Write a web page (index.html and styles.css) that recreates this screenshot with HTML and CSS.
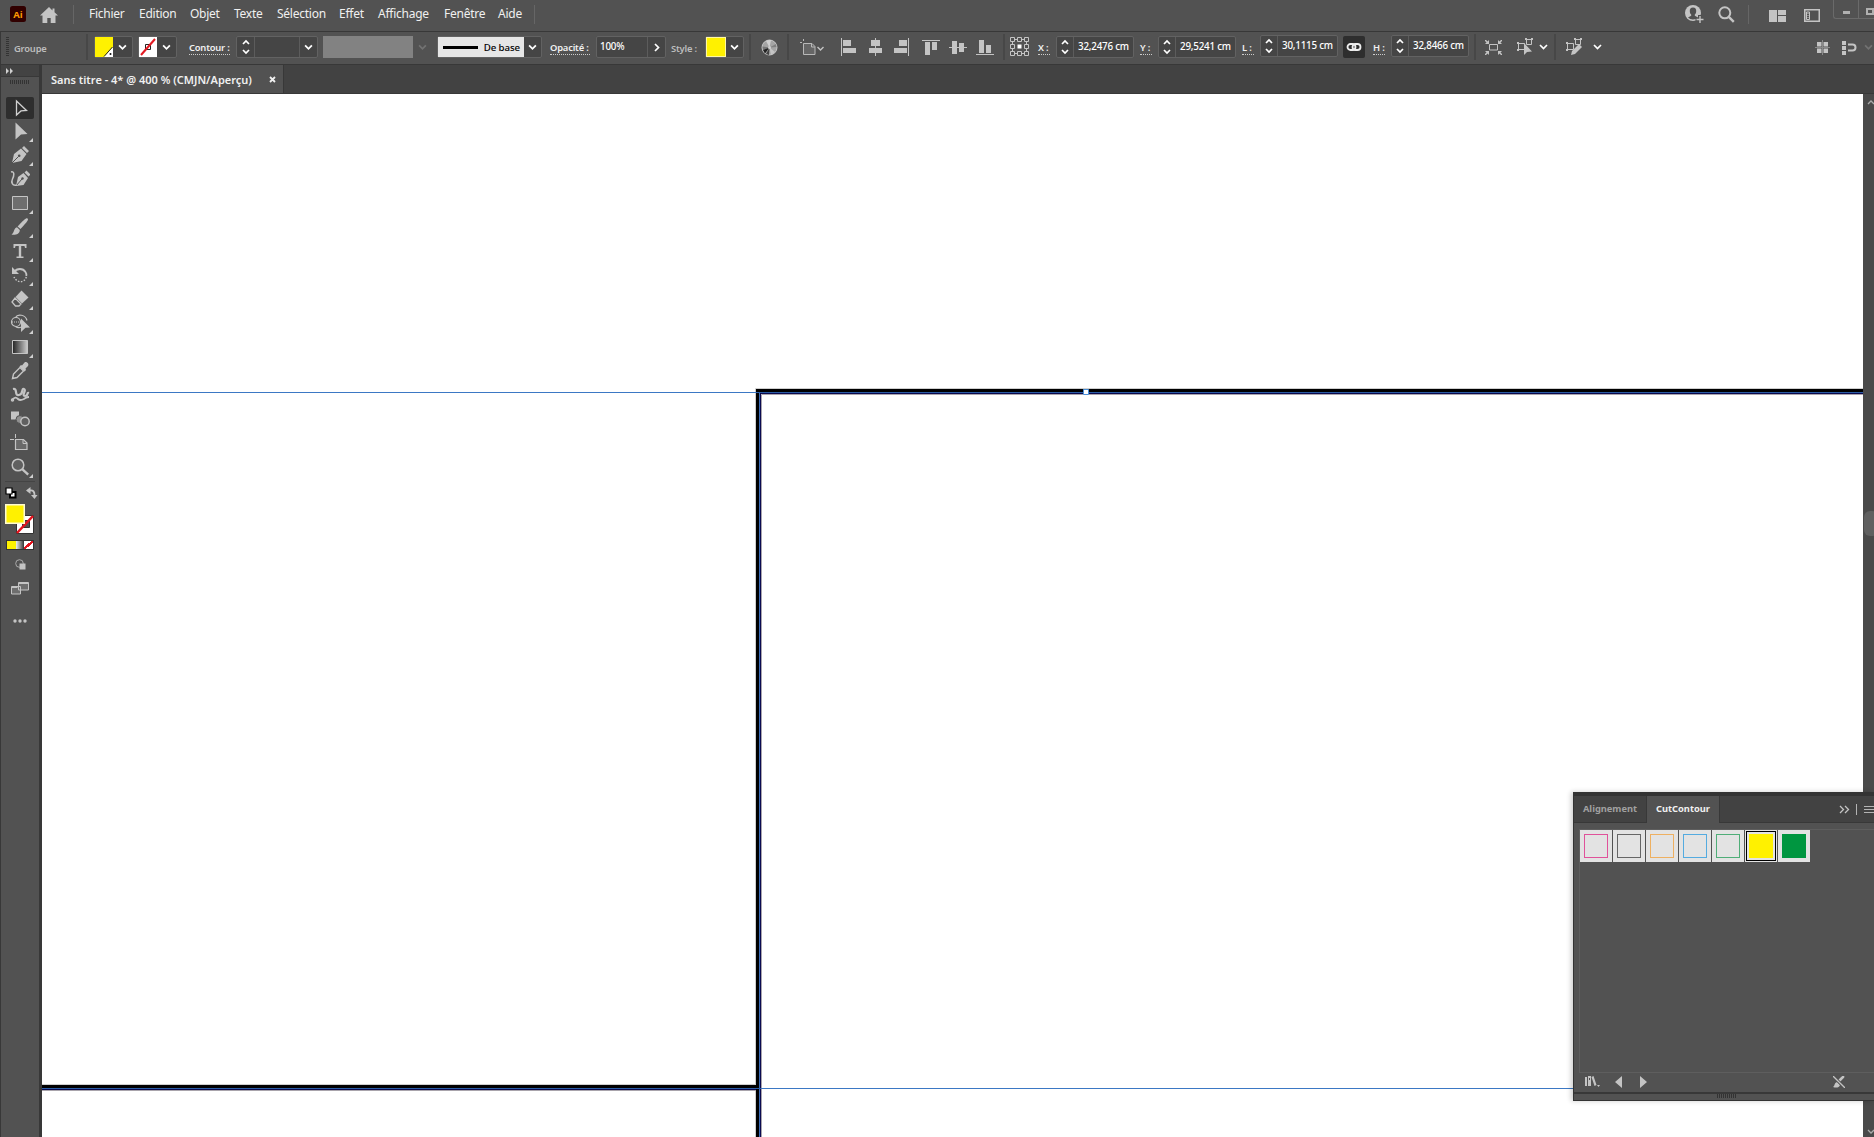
FILE: index.html
```
<!DOCTYPE html>
<html lang="fr">
<head>
    <meta charset="utf-8">
    <title>Sans titre - 4</title>
    <link rel="stylesheet" href="styles.css">
</head>
<body>
    <!-- shared icons -->
    <svg class="defs" width="0" height="0">
        <symbol id="down" viewBox="0 0 8 6"><path d="M1 1.2l3 3 3-3" fill="none" stroke="currentColor" stroke-width="1.6"/></symbol>
        <symbol id="updown" viewBox="0 0 8 16"><path d="M1 5l3-3 3 3M1 11l3 3 3-3" fill="none" stroke="currentColor" stroke-width="1.7"/></symbol>
    </svg>

    <div class="menubar">
        <svg class="ai" width="16" height="16"><rect width="16" height="16" rx="2.5" fill="#310000"/><text x="8" y="11.8" text-anchor="middle">Ai</text></svg>
        <svg class="home" width="18" height="16" viewBox="0 0 18 16"><path d="M9 0L0 8.6h2.500V16h4.800v-5h3.400v5h4.800V8.600H18L14.500 5.300V1.500h-2v1.900z" fill="#c4c4c4"/></svg>
        <span class="vline"></span>
        <nav>
            <span class="w35">Fichier</span><span class="w36">Edition</span><span class="w29">Objet</span><span class="w28">Texte</span><span class="w47">Sélection</span><span class="w24">Effet</span><span class="w51">Affichage</span><span class="w39">Fenêtre</span><span class="w24">Aide</span>
        </nav>
        <span class="vline"></span>
        <div class="menu-right">
            <svg class="user" width="19" height="19" viewBox="0 0 19 19"><circle cx="8" cy="8" r="8" fill="#c4c4c4"/><path d="M8 2.500c-2.300 0-3.400 1.700-3.200 3.700 0 1.500.6 2.600 1.400 3.400v1.200L3 12.500C5.500 15 10.500 15 13 12.500l-3.200-1.700V9.600c.8-.8 1.400-1.900 1.400-3.400.2-2-.9-3.700-3.200-3.700z" fill="#505050"/><path d="M10 9h9v10h-9z" fill="none"/><path d="M15 10v9M10.500 14.500h9" stroke="#505050" stroke-width="4"/><path d="M15 11v7M11.500 14.500h7" stroke="#c4c4c4" stroke-width="1.400"/></svg>
            <svg class="search" width="17" height="17" viewBox="0 0 17 17"><circle cx="6.800" cy="6.800" r="5.500" fill="none" stroke="#c4c4c4" stroke-width="2"/><path d="M10.800 10.800l5 5" stroke="#c4c4c4" stroke-width="2.400"/></svg>
            <span class="vline"></span>
            <svg class="layout" width="17" height="12"><path d="M0 0h8v12H0zM9 0h8v5H9zM9 6h8v6H9z" fill="#c4c4c4"/></svg>
            <svg class="wspace" width="16" height="13"><path d="M.75 .75h14.500v11.500H.75z" fill="none" stroke="#c4c4c4" stroke-width="1.500"/><path d="M2.500 3h3v7.500h-3z" fill="none" stroke="#c4c4c4"/><path d="M4 4v6" stroke="#c4c4c4" stroke-dasharray="1 1"/></svg>
            <div class="winbtns"><span class="min"></span><span class="max"></span></div>
        </div>
    </div>

    <div class="controlbar">
        <span class="grip-v"></span>
        <span class="lbl groupe">Groupe</span>
        <span class="sep s1"></span>
        <div class="box fill"><svg width="18" height="20"><path d="M0 0h18v20H0z" fill="#fff100"/><path d="M18 10v10H9z" fill="#fff"/><path d="M17.500 10L9 19.500" stroke="#222"/><circle cx="15.500" cy="17" r="1" fill="#111"/></svg><i><svg width="9" height="7"><use href="#down"/></svg></i></div>
        <div class="box stroke"><svg width="18" height="20"><path d="M0 0h18v20H0z" fill="#fff"/><path d="M6.500 7.500h5v5h-5z" fill="none" stroke="#222"/><path d="M2 18L16 2" stroke="#e31b23" stroke-width="2"/></svg><i><svg width="9" height="7"><use href="#down"/></svg></i></div>
        <span class="lbl dot contour">Contour :</span>
        <div class="box width"><i><svg width="8" height="16"><use href="#updown"/></svg></i><b></b><i><svg width="9" height="7"><use href="#down"/></svg></i></div>
        <div class="profile"></div>
        <svg class="dim" width="9" height="7"><use href="#down"/></svg>
        <div class="box brush"><div class="brush-def"><hr><span>De base</span></div><i><svg width="9" height="7"><use href="#down"/></svg></i></div>
        <span class="lbl dot opac">Opacité :</span>
        <div class="box pct"><b>100%</b><i><svg width="6" height="9"><path d="M1 1l3.500 3.500L1 8" fill="none" stroke="#fff" stroke-width="1.700"/></svg></i></div>
        <span class="lbl style">Style :</span>
        <div class="box styl"><em></em><i><svg width="9" height="7"><use href="#down"/></svg></i></div>
        <span class="sep s2"></span>
        <svg class="wheel" width="17" height="17"><circle cx="8.500" cy="8.500" r="7.500" fill="#a4a4a4" stroke="#c8c8c8"/><path d="M8.500 8.500L5 2a8 8 0 0 1 5-1z" fill="#d0d0d0"/><path d="M8.500 8.500L1.500 7.500 2 11z" fill="#777"/><path d="M8.500 8.500L2 11l2 3.500z" fill="#222"/><path d="M8.500 8.500L5 15l3 1z" fill="#444"/><path d="M8.500 8.500L10 16l4-3z" fill="#c4c4c4"/><path d="M8.500 8.500L15 5l.5 3z" fill="#808080"/><circle cx="8.500" cy="8.500" r="1.500" fill="#d0d0d0"/></svg>
        <span class="sep s3"></span>
        <svg class="artb" width="26" height="17"><path d="M3.500 4.500h8.500l3 3v8h-11.500z" fill="#666" stroke="#b8b8b8"/><path d="M3.500 0v2M0 3.500h2M11.500 4.500v3.500H15" fill="none" stroke="#b8b8b8"/><path d="M17.500 8l3 3 3-3" fill="none" stroke="#c4c4c4" stroke-width="1.400"/></svg>

        <div class="align">
            <svg width="15" height="18"><path d="M0 0h1v18H0zM2 2h8v6H2zM2 10h13v5H2z"/></svg>
            <svg width="15" height="18"><path d="M7 0h1v18H7zM3 2h9v6H3zM1 10h13v5H1z"/></svg>
            <svg width="15" height="18"><path d="M14 0h1v18h-1zM5 2h8v6H5zM0 10h13v5H0z"/></svg>
            <svg class="g" width="18" height="17"><path d="M0 1h18v1H0zM3 3h5v13H3zM10 3h5v8h-5z"/></svg>
            <svg width="18" height="17"><path d="M0 8h18v1H0zM3 2h5v13H3zM10 4h5v9h-5z"/></svg>
            <svg width="18" height="17"><path d="M0 15h18v1H0zM3 1h5v13H3zM10 6h5v8h-5z"/></svg>
        </div>
        <span class="sep s4"></span>
        <svg class="refpt" width="20" height="20"><path d="M2.500 2.500h14v14h-14z" fill="none" stroke="#c4c4c4"/><path d="M.5 .5h4v4h-4zM7.500 .5h4v4h-4zM14.500 .5h4v4h-4zM.5 7.500h4v4h-4zM14.500 7.500h4v4h-4zM.5 14.500h4v4h-4zM7.500 14.500h4v4h-4zM14.500 14.500h4v4h-4z" fill="#505050" stroke="#c4c4c4"/><path d="M7.500 7.500h4v4h-4z" fill="#fff"/></svg>
        <span class="lbl dot coord cx">X :</span>
        <div class="box num"><i><svg width="8" height="16"><use href="#updown"/></svg></i><b>32,2476 cm</b></div>
        <span class="lbl dot coord">Y :</span>
        <div class="box num"><i><svg width="8" height="16"><use href="#updown"/></svg></i><b>29,5241 cm</b></div>
        <span class="lbl dot coord">L :</span>
        <div class="box num up"><i><svg width="8" height="16"><use href="#updown"/></svg></i><b>30,1115 cm</b></div>
        <div class="link"><svg width="16" height="8"><g fill="none" stroke="#eee" stroke-width="1.800"><rect x="1.500" y="1" width="8" height="6" rx="3"/><rect x="6.500" y="1" width="8" height="6" rx="3"/></g></svg></div>
        <span class="lbl dot coord ch">H :</span>
        <div class="box num up"><i><svg width="8" height="16"><use href="#updown"/></svg></i><b>32,8466 cm</b></div>
        <span class="sep s5"></span>
        <svg class="isol" width="17" height="15"><path d="M4.500 4.500h8v5.500h-8z" fill="none" stroke="#c4c4c4"/><path d="M0 0l3 3M17 0l-3 3M0 15l3-3M17 15l-3-3" stroke="#c4c4c4" stroke-width="1.500"/><path d="M0 4h4V0zM17 4h-4V0zM0 11h4v4zM17 11h-4v4z" fill="#c4c4c4"/></svg>
        <svg class="selsim" width="32" height="18"><path d="M1.500 5.500h6v6h-6zM9.500 1.500h5v5h-5z" fill="none" stroke="#c4c4c4"/><path d="M0 5h2M0 12h2M8 1h2M14 1h2" stroke="#c4c4c4" stroke-width="2"/><path d="M7 5v12l3-3 5-.5z" fill="#c4c4c4"/><path d="M23 7l3.500 3.500L30 7" fill="none" stroke="#fff" stroke-width="1.700"/></svg>
        <span class="sep s6"></span>
        <svg class="editsim" width="36" height="18"><path d="M1.500 5.500h6v6h-6zM9.500 1.500h5v5h-5z" fill="none" stroke="#c4c4c4"/><path d="M0 5h2M0 12h2M8 1h2M14 1h2" stroke="#c4c4c4" stroke-width="2"/><path d="M5 17l1-4 7-7 3 3-7 7z" fill="#c4c4c4"/><path d="M28 7l3.500 3.500L35 7" fill="none" stroke="#fff" stroke-width="1.700"/></svg>
        <div class="ctl-right">
            <svg width="15" height="15"><path d="M2 2h4.500v4.500H2zM8.500 2H13v4.500H8.500zM2 8.500h4.500V13H2zM8.500 8.500H13V13H8.500z" fill="#c4c4c4"/><path d="M7.500 0v15M0 7.500h15" stroke="#8a8a8a"/></svg>
            <svg width="15" height="15"><path d="M0 1h4v4H0zM0 6h4v4H0zM0 11h4v4H0z" fill="#c4c4c4"/><path d="M6 4.500h4.500a3 3 0 0 1 0 6H6" fill="none" stroke="#c4c4c4" stroke-width="2"/></svg>
            <svg class="dim" width="9" height="7"><use href="#down"/></svg>
        </div>
    </div>

    <div class="work">
        <div class="toolcol">
            <div class="tools">
                <div class="tools-head"><svg width="8" height="6"><path d="M0 0l3 3-3 3zM4 0l3 3-3 3z" fill="#d0d0d0"/></svg></div>
                <span class="grip-h"></span>
                <div class="tool on"><svg width="20" height="20"><path d="M6.500 3l10 9.500-5.500.4L6.500 17z" fill="none" stroke="#d0d0d0" stroke-width="1.300"/></svg></div>
                <div class="tool more"><svg width="20" height="20"><path d="M5.500 1.500l12 11.500-6.500.4-5.500 5z"/></svg></div>
                <div class="tool more"><svg width="20" height="20"><path d="M2 18l2-9 7-5.500 5.500 5.500-5 7zM12 3l2-2 5 5-2 2z"/><path d="M2 18l6.500-6.500" stroke="#505050"/><circle cx="9.200" cy="10.800" r="1.300" fill="#505050"/></svg></div>
                <div class="tool"><svg width="20" height="20"><path d="M6 17l2-9 5.500-4 4.500 5-4.500 7zM14.500 3.500l2-2 4 4-2 2z"/><path d="M6 17l6-7" stroke="#505050"/><circle cx="12.500" cy="9.500" r="1.200" fill="#505050"/><path d="M1 3c4-1 3 4 1.500 7S2 17.500 7 16" fill="none" stroke="#c4c4c4" stroke-width="1.500"/></svg></div>
                <div class="tool more"><svg width="20" height="20"><path d="M2.500 3.500h15v13h-15z" fill="#6e6e6e" stroke="#c4c4c4"/></svg></div>
                <div class="tool more"><svg width="20" height="20"><path d="M17.500 1.500c1.500 1 0 3-7 10.500L7.600 9.500C14 2.500 16.500 .5 17.500 1.500zM7 10.300l2.800 2.700c0 4.500-5.300 5.500-8.300 4.500 3-1.500 2-6.500 5.500-7.200z"/></svg></div>
                <div class="tool more"><svg width="20" height="20"><path d="M3.500 3h13v4h-1.500l-.5-2H11.200v10.500H13.500V17h-7v-1.500h2.300V5H5.500L5 7H3.500z"/></svg></div>
                <div class="tool more"><svg width="20" height="20"><path d="M4 7c3-4 9-4 11.500 0 1 1.500 1 3 .8 4" fill="none" stroke="#c4c4c4" stroke-width="1.800"/><path d="M2 2v7h7z"/><path d="M16.300 12c-1.500 5.500-9 7-12.300 0" fill="none" stroke="#c4c4c4" stroke-width="1.500" stroke-dasharray="1.500 1.500"/></svg></div>
                <div class="tool more"><svg width="20" height="20"><path d="M11.500 1.500l7 7-6.500 6L5.500 8z"/><path d="M5 9l6 6-2 2H5.500L2 13z" fill="none" stroke="#c4c4c4" stroke-width="1.300"/></svg></div>
                <div class="tool more"><svg width="20" height="20"><g fill="none" stroke="#c4c4c4" stroke-width="1.200"><circle cx="6" cy="9" r="4.500"/><path d="M5.500 4.500c2-4 10-3 11.500 3M5.500 13.500c2 1.500 4 1.500 6 .5"/><path d="M2 9h10" stroke-dasharray="1 1"/></g><path d="M11 5.500l9 9-4.500.3L11 19z"/></svg></div>
                <div class="tool more"><svg width="20" height="20"><defs><linearGradient id="gr"><stop offset="0" stop-color="#222"/><stop offset="1" stop-color="#ccc"/></linearGradient></defs><path d="M2.500 3.500h15v13h-15z" fill="url(#gr)" stroke="#c4c4c4"/></svg></div>
                <div class="tool"><svg width="20" height="20"><path d="M12 4.500l2.500-3c2-1.500 5 1.500 3.500 3.500L15.500 7.500l.5 1.500-1.500 1.500L9.500 5.500 11 4z"/><path d="M10 6.500L3.500 13 2.500 17.500l4.500-1L13.500 10z" fill="none" stroke="#c4c4c4" stroke-width="1.400"/></svg></div>
                <div class="tool"><svg width="20" height="20"><g fill="none" stroke="#c4c4c4"><path d="M3 4c5-1 1 7 6 6s2-7 5-6-3 7 1 7 1-4 4-3" stroke-width="2.200"/><path d="M2 15c3-3 4-3 6-1s4 1 6 0 2-2 5-2" stroke-width="1.800"/><circle cx="2.500" cy="15" r="1" stroke-width="1.500"/></g></svg></div>
                <div class="tool"><svg width="20" height="20"><path d="M1 2.500h8v8H1z"/><circle cx="10" cy="10.500" r="4" fill="#909090" stroke="#505050"/><circle cx="15" cy="12.500" r="4.200" fill="#606060" stroke="#c4c4c4" stroke-width="1.400"/></svg></div>
                <div class="tool"><svg width="20" height="20"><path d="M5.500 6.500h8l3.500 3.500v6.500h-11.500z" fill="#6a6a6a" stroke="#c4c4c4" stroke-width="1.200"/><path d="M0 6.500h4M5.500 1v4M13 6.500v4h4" fill="none" stroke="#c4c4c4"/></svg></div>
                <div class="tool more"><svg width="20" height="20"><circle cx="8" cy="8" r="5.800" fill="#606060" stroke="#c4c4c4" stroke-width="1.500"/><path d="M12.200 12.200l6 5.500" stroke="#c4c4c4" stroke-width="2.400"/></svg></div>
                <span class="tsep"></span>
                <div class="fillrow"><svg width="12" height="12"><path d="M5 5h5.500v5.500H5z" fill="#fff" stroke="#000" stroke-width="2"/><path d="M1 1h6v6H1z" fill="#fff" stroke="#000" stroke-width="1.200"/></svg><svg width="12" height="12"><path d="M4 3.500c3-.5 4.500 1 4.500 4.500" fill="none" stroke="#c4c4c4" stroke-width="1.800"/><path d="M0 3.500L4.500 0v7zM5 8h6.500L8.500 12z" fill="#c4c4c4"/></svg></div>
                <svg class="colors" width="30" height="30"><path d="M11.500 11.500h17v18h-17z" fill="#fff" stroke="#333"/><path d="M17.500 16.500h7v7h-7z" fill="#505050" stroke="#333"/><path d="M12 29L28 12" stroke="#e3141e" stroke-width="2.500"/><path d="M.75 .75h18.500v18.500H.75z" fill="#fff100" stroke="#fffbd0" stroke-width="1.500"/></svg>
                <div class="modes"><span class="m1"></span><span class="m2"></span><span class="m3"></span></div>
                <svg class="mask" width="11" height="11"><circle cx="4.500" cy="4.500" r="3.800" fill="none" stroke="#aaa"/><path d="M4.500 4.500h6v6h-6z" fill="#c4c4c4"/></svg>
                <svg class="screen" width="18" height="13"><path d="M.5 4.500h9v7.500h-9zM7.500 .5h10v7.500h-10z" fill="#6e6e6e" stroke="#c4c4c4"/><path d="M7.500 1.500h10M.5 5.500h6" stroke="#c4c4c4"/></svg>
                <svg class="dots" width="14" height="4"><circle cx="2" cy="2" r="1.700"/><circle cx="7" cy="2" r="1.700"/><circle cx="12" cy="2" r="1.700"/></svg>
            </div>
        </div>
        <div class="doc">
            <div class="tabbar"><div class="tab"><span>Sans titre - 4* @ 400 % (CMJN/Aperçu)</span><svg width="7" height="7"><path d="M1 1l5 5M6 1L1 6" stroke="#f0f0f0" stroke-width="1.800"/></svg></div></div>
            <div class="view">
                <!-- artwork: two rectangles with selection edges -->
                <svg class="art" width="1821" height="1043">
                    <path d="M713.500 1043V294.500H1821M0 990.500h714" stroke="#cfcfcf" fill="none"/>
                    <path d="M714 295H1821v5H719v743h-5v-47H0v-5h714z" fill="#000"/>
                    <path d="M719.500 1043V300.500H1821M0 996.500h714" fill="none" stroke="#a9a4ac"/>
                    <path d="M718.500 1043V299.500H1821M0 995.500h714" fill="none" stroke="#0a0a50"/>
                    <path d="M717.500 1043V298.500" stroke="#3b6cb8"/>
                    <path d="M0 298.500h714M719 994.500h1102" stroke="#3b78c4"/>
                    <path d="M714 298.500h1107M0 994.500h719" stroke="#2b5ca4"/>
                    <path d="M1041.500 295.500h5v5h-5z" fill="#fff" stroke="#4a90d9"/>
                </svg>
                <div class="scroll"><svg class="sup" width="8" height="6"><path d="M1 5l3-3 3 3" fill="none" stroke="#aaa" stroke-width="1.300"/></svg><span class="thumb"></span><svg class="sdn" width="8" height="6"><path d="M1 1l3 3 3-3" fill="none" stroke="#aaa" stroke-width="1.300"/></svg></div>
            </div>
        </div>
    </div>

    <div class="panel">
        <div class="ptabs">
            <span class="ptab off">Alignement</span><span class="ptab cur">CutContour</span>
            <svg width="35" height="14"><path d="M1 4l3.500 3.500L1 11M6 4l3.500 3.500L6 11" fill="none" stroke="#c4c4c4" stroke-width="1.300"/><path d="M17.500 2v11M25 4.500h11M25 7.500h11M25 10.500h11" stroke="#b4b4b4"/></svg>
        </div>
        <div class="plist">
            <div class="sw"><i class="pink"></i></div>
            <div class="sw"><i class="grey"></i></div>
            <div class="sw"><i class="orange"></i></div>
            <div class="sw"><i class="blue"></i></div>
            <div class="sw"><i class="green"></i></div>
            <div class="sw sel"><i class="yellow"></i></div>
            <div class="sw"><i class="solid"></i></div>
        </div>
        <div class="pfoot">
            <svg width="64" height="12"><path d="M0 1h2v9H0zM3 0h3v10H3zM6.500 1L8.500 0l3 9-2 1zM12 9h3l-1.500 2z"/><path d="M4 2h1v2H4z" fill="#505050"/><path d="M37 0v12l-7-6zM55 0v12l7-6z"/></svg>
            <svg class="nobrush" width="12" height="12"><path d="M11 0c1 1 1 1-5 7L4 5C10-1 10-1 11 0zM4 6l3 3c-1 3-4 3-7 2 2-1 1-4 4-5z"/><path d="M0 0l12 12" stroke="#505050" stroke-width="3"/><path d="M0 0l12 12" stroke="#c4c4c4" stroke-width="1.300"/></svg>
        </div>
        <div class="pgrip"><span></span></div>
    </div>
</body>
</html>
```
FILE: styles.css
```
* {
    box-sizing: border-box;
}
body {
    margin: 0;
    width: 1874px;
    height: 1137px;
    overflow: hidden;
    background: #525252;
    color: #f0f0f0;
    font-family: "Noto Sans", "Open Sans", sans-serif;
    display: flex;
    flex-direction: column;
}
svg {
    display: block;
    flex: none;
}
.defs {
    position: absolute;
}

/* menu bar */
.menubar {
    height: 32px;
    flex: none;
    display: flex;
    align-items: center;
    padding: 0 0 3px 10px;
    border-bottom: 1px solid #383838;
}
.ai text {
    font: bold 9.5px "Open Sans", sans-serif;
    fill: #ff9a00;
}
.home {
    margin: 1px 15px 0 14px;
}
.vline {
    width: 1px;
    height: 19px;
    background: #666;
}
nav {
    display: flex;
    gap: 15px;
    margin: -1px 12px 0 15px;
    font-size: 12px;
    letter-spacing: -0.25px;
}
nav span {
    white-space: nowrap;
}
.w24 { width: 24px; }
.w28 { width: 28px; }
.w29 { width: 29px; }
.w35 { width: 35px; }
.w36 { width: 36px; }
.w39 { width: 39px; }
.w47 { width: 47px; }
.w51 { width: 51px; }
.menu-right {
    margin-left: auto;
    width: 189px;
    display: flex;
    align-items: center;
    height: 28px;
}
.search {
    margin: 0 13px 0 14px;
}
.layout {
    margin: 3px 18px 0 20px;
}
.wspace {
    margin: 3px 13px 0 0;
}
.winbtns {
    align-self: flex-start;
    display: flex;
    width: 41px;
    height: 19px;
    overflow: hidden;
    border: 1px solid #6a6a6a;
    border-width: 0 0 1px 1px;
    border-radius: 0 0 0 3px;
}
.min {
    width: 28px;
    height: 18px;
    border-right: 1px solid #6a6a6a;
    padding: 11px 8px 0 9px;
}
.min::before {
    content: "";
    display: block;
    height: 3px;
    background: #b0b0b0;
}
.max {
    margin: 8px 0 0 7px;
    width: 9px;
    height: 7px;
    border: 2px solid #b0b0b0;
}

/* control bar */
.controlbar {
    height: 33px;
    flex: none;
    display: flex;
    align-items: center;
    padding: 0 0 2px 5px;
    border-bottom: 1px solid #383838;
    border-left: 1px solid #383838;
    font-size: 9.4px;
}
.controlbar > * {
    flex: none;
}
.grip-v {
    width: 3px;
    height: 20px;
    background: repeating-linear-gradient(#333 0 1px, #525252 1px 2px);
}
.lbl {
    font-weight: 600;
    line-height: 13px;
    margin-top: 2px;
    white-space: nowrap;
    letter-spacing: -0.2px;
}
.dot {
    border-bottom: 1px dotted #ccc;
}
.groupe {
    width: 72px;
    margin-left: 5px;
    color: #bdbdbd;
}
.sep {
    width: 2px;
    height: 26px;
    background: #474747;
}
.box {
    display: flex;
    height: 22px;
    border: 1px solid #626262;
    border-radius: 2px;
    background: #454545;
    color: #fff;
}
.box > svg, .box > em {
    height: 20px;
}
.box i {
    flex: 1;
    display: flex;
    align-items: center;
    justify-content: center;
}
.box b {
    font-weight: 500;
    line-height: 19px;
    white-space: nowrap;
    letter-spacing: -0.2px;
}
.fill { width: 39px; margin-left: 6px; }
.stroke { width: 39px; margin-left: 5px; }
.contour { width: 41px; margin-left: 12px; }
.width { width: 82px; margin-left: 6px; }
.width b {
    width: 46px;
    border: 1px solid #5c5c5c;
    border-width: 0 1px;
}
.width i {
    flex: none;
    width: 17px;
}
.profile {
    width: 90px;
    height: 22px;
    margin-left: 5px;
    background: #828282;
}
.dim {
    color: #727272;
}
.profile + .dim {
    margin: 0 10px 0 5px;
}
.brush { width: 105px; }
.brush-def {
    width: 86px;
    background: #e6e6e6;
    color: #000;
    display: flex;
    align-items: center;
    justify-content: space-between;
    padding: 0 4px 0 5px;
    font-size: 9.7px;
    font-weight: 500;
    letter-spacing: -0.1px;
}
.brush-def hr {
    width: 35px;
    height: 3px;
    margin: 0;
    border: 0;
    background: #000;
}
.opac { width: 40px; margin-left: 8px; }
.pct { width: 70px; margin-left: 6px; }
.pct b {
    width: 51px;
    padding-left: 3px;
    font-size: 9.8px;
    border-right: 1px solid #5c5c5c;
}
.style { width: 29px; margin-left: 5px; color: #bdbdbd; }
.styl { width: 39px; margin-left: 5px; }
.styl em {
    width: 20px;
    background: #fff100;
    border: 1px solid #fff8a0;
}
.s2 { margin: 0 10px 0 5px; }
.s3 { margin: 0 11px 0 9px; }
.align {
    display: flex;
    align-items: center;
    gap: 9px;
    margin-left: 15px;
    fill: #c4c4c4;
}
.align svg:nth-child(2) {
    margin: 0 2px 0 3px;
}
.align .g {
    margin-left: 4px;
}
.s4 { margin: 0 5px 0 9px; }
.coord {
    width: 12px;
    margin: 2px 6px 0 5px;
}
.cx { margin-left: 8px; }
.ch { margin-left: 8px; }
.coord + .num {
    margin-right: 1px;
}
.num { width: 78px; }
.num i {
    flex: none;
    width: 17px;
    border-right: 1px solid #5c5c5c;
}
.num b {
    flex: 1;
    padding-left: 4px;
    font-size: 9.8px;
}
.up { margin-top: -2px; }
.link {
    width: 22px;
    height: 22px;
    margin-left: 4px;
    border-radius: 2px;
    background: #2e2e2e;
    display: flex;
    align-items: center;
    justify-content: center;
}
.s5 { margin: 0 9px 0 4px; }
.selsim { margin-left: 15px; }
.s6 { margin: 0 10px 0 5px; }
.ctl-right {
    margin-left: auto;
    display: flex;
    align-items: center;
    gap: 12px;
}
.ctl-right .dim {
    margin: 0 1px 0 -5px;
}

/* toolbox */
.work {
    flex: 1;
    display: flex;
    min-height: 0;
}
.toolcol {
    width: 42px;
    flex: none;
    background: #383838;
    padding: 0 3px 0 1px;
}
.tools {
    height: 100%;
    background: #525252;
    display: flex;
    flex-direction: column;
}
.tools-head {
    height: 12px;
    flex: none;
    padding: 3px 0 0 5px;
    background: #434343;
    border-bottom: 1px solid #383838;
}
.grip-h {
    flex: none;
    width: 20px;
    height: 4px;
    margin: 3px 0 12px 9px;
    background: repeating-linear-gradient(90deg, #333 0 1px, #525252 1px 2px);
}
.tool {
    position: relative;
    height: 24px;
    flex: none;
    padding: 1px 0 0 9px;
}
.tool svg {
    fill: #c4c4c4;
}
.on {
    height: 22px;
    width: 28px;
    margin: 1px 0 1px 5px;
    padding: 1px 0 0 4px;
    border-radius: 2px;
    background: #2e2e2e;
}
.more::after {
    content: "";
    position: absolute;
    left: 28px;
    bottom: 2px;
    border: 2px solid transparent;
    border-right-color: #d0d0d0;
    border-bottom-color: #d0d0d0;
}
.tsep {
    height: 1px;
    flex: none;
    margin: 1px 4px 5px;
    background: #444;
}
.fillrow {
    display: flex;
    gap: 9px;
    padding-left: 4px;
}
.colors { margin: 5px 0 0 4px; }
.modes {
    display: flex;
    width: 28px;
    height: 10px;
    margin: 6px 0 8px 5px;
    border: 1px solid #333;
}
.modes span {
    width: 9px;
}
.m1 { background: #fff100; }
.m2 { background: linear-gradient(90deg, #eee, #333); }
.m3 { background: linear-gradient(to bottom right, #fff 40%, #e3141e 40% 60%, #fff 60%); }
.mask { margin: 1px 0 12px 14px; }
.screen { margin-left: 10px; }
.dots {
    margin: 24px 0 0 12px;
    fill: #c4c4c4;
}

/* document */
.doc {
    flex: 1;
    display: flex;
    flex-direction: column;
}
.tabbar {
    height: 29px;
    flex: none;
    background: #424242;
    border-bottom: 1px solid #383838;
}
.tab {
    width: 242px;
    height: 28px;
    display: flex;
    align-items: center;
    justify-content: space-between;
    padding: 0 7px 0 9px;
    background: #525252;
    border-right: 1px solid #383838;
    font-size: 11px;
    font-weight: 600;
    white-space: nowrap;
}
.view {
    flex: 1;
    display: flex;
    background: #fff;
}
.scroll {
    width: 11px;
    flex: none;
    background: #4a4a4a;
    display: flex;
    flex-direction: column;
    padding: 5px 0 0 4px;
}
.thumb {
    width: 14px;
    height: 25px;
    margin: 406px 0 593px -3px;
    border-radius: 6px;
    background: #606060;
}

/* floating panel */
.panel {
    position: absolute;
    left: 1573px;
    top: 792px;
    width: 301px;
    height: 309px;
    display: flex;
    flex-direction: column;
    background: #525252;
    border: 1px solid #333;
    border-width: 4px 0 1px 1px;
    box-shadow: -2px 0 5px rgba(0, 0, 0, 0.2);
}
.ptabs {
    height: 27px;
    flex: none;
    display: flex;
    background: #424242;
    border-bottom: 1px solid #383838;
    font-size: 9.3px;
    font-weight: bold;
    line-height: 25px;
}
.ptabs svg {
    margin: 6px 0 0 auto;
}
.ptab {
    height: 27px;
    text-align: center;
}
.off {
    width: 72px;
    color: #a0a0a0;
}
.cur {
    width: 74px;
    background: #525252;
    border: 1px solid #383838;
    border-width: 0 1px;
}
.plist {
    height: 244px;
    flex: none;
    margin: 6px 0 0 5px;
    border: 1px solid #5e5e5e;
    border-right: 0;
    display: flex;
    align-items: flex-start;
    gap: 1px;
}
.sw {
    width: 32px;
    height: 32px;
    padding: 4px;
    background: #e3e3e3;
}
.sel {
    outline: 1px solid #000;
    outline-offset: -2px;
}
.sw i {
    display: block;
    width: 24px;
    height: 24px;
    border: 1px solid;
}
.pink { color: #e0529a; }
.grey { color: #666; }
.orange { color: #eeb061; }
.blue { color: #54abe0; }
.green { color: #4fae78; }
.yellow { color: #fff100; background: #fff100; }
.solid { color: #009640; background: #009640; }
.pfoot {
    flex: 1;
    display: flex;
    justify-content: space-between;
    align-items: center;
    padding: 0 29px 1px 11px;
    fill: #c4c4c4;
}
.pgrip {
    height: 8px;
    flex: none;
    border-top: 2px solid #383838;
    padding-left: 143px;
}
.pgrip span {
    display: block;
    width: 20px;
    height: 4px;
    background: repeating-linear-gradient(90deg, #333 0 1px, #525252 1px 2px);
}
```
